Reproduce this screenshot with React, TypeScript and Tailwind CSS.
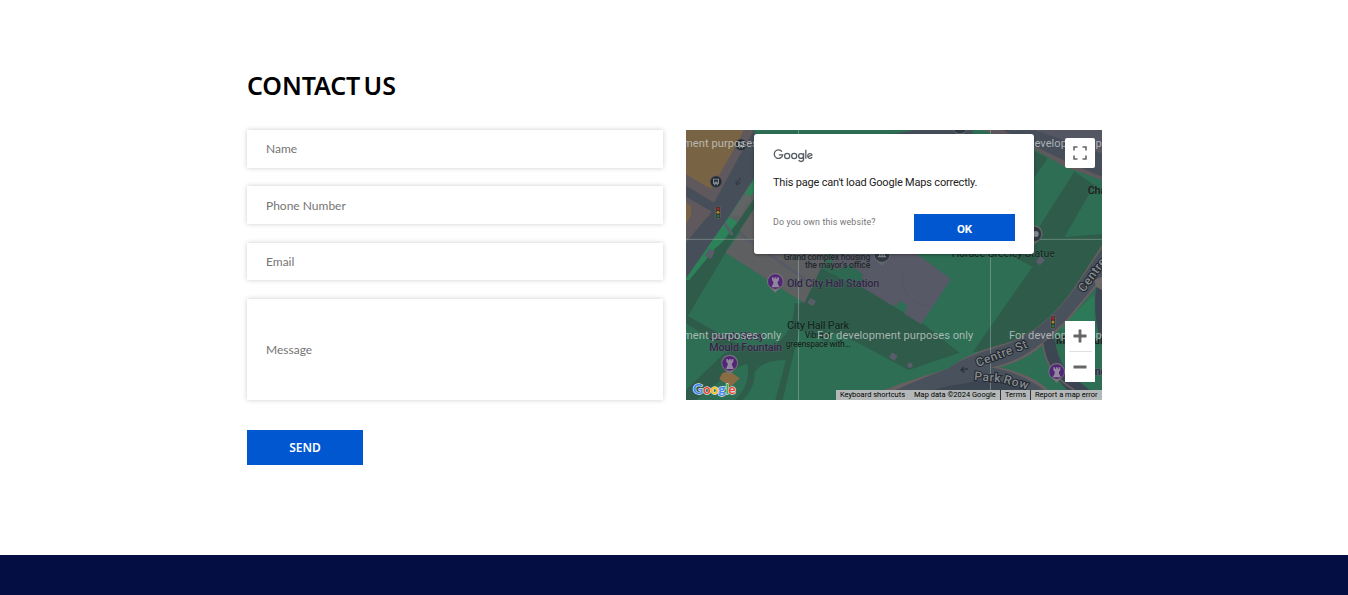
import React from "react";

const fieldClass =
  "block w-full bg-white pl-[19px] pr-4 text-[12px] leading-[18px] text-[#666] placeholder:text-[#757575] placeholder:opacity-100 outline-none shadow-[0_0_5px_rgba(0,0,0,0.2)] font-['Lato',sans-serif]";

function Rook({ x, y }: { x: number; y: number }) {
  return (
    <g transform={`translate(${x} ${y})`}>
      <path d="M-25-1A25 25 0 1 1 25-1C25 16 11 20 0 34C-11 20-25 16-25-1Z" fill="#77727b" />
      <circle r="22" fill="#512577" />
      <path
        d="M-10-13h5v4h3v-4h5v4h3v-4h5v9l-4 4v6l3 5v2h2v4h-23v-4h2v-2l3-5v-6l-4-4z"
        fill="#92879c"
      />
    </g>
  );
}

function DarkPin({ x, y }: { x: number; y: number }) {
  return (
    <g transform={`translate(${x} ${y})`}>
      <path d="M-26-1A26 26 0 1 1 26-1C26 16 11 20 0 34C-11 20-26 16-26-1Z" fill="#63676b" />
      <circle r="22" fill="#303941" />
      <path d="M-12 8v-4h3v-9h-3v-3l12-6 12 6v3h-3v9h3v4z" fill="#83888c" />
      <path d="M-5-5v9M0-5v9M5-5v9" stroke="#303941" strokeWidth="2" />
    </g>
  );
}

function Transit({ x, y }: { x: number; y: number }) {
  return (
    <g transform={`translate(${x} ${y})`}>
      <circle r="17" fill="#222a34" stroke="#4d535a" strokeWidth="1.5" />
      <path d="M-9-9h18v16h-3v4h-4v-4h-4v4h-4v-4h-3z" fill="#8b8f94" />
      <path d="M-6-6h12v6h-12z" fill="#222a34" />
      <circle cx="-5" cy="3.5" r="1.5" fill="#222a34" />
      <circle cx="5" cy="3.5" r="1.5" fill="#222a34" />
    </g>
  );
}

function TrafficLight({ x, y }: { x: number; y: number }) {
  return (
    <g transform={`translate(${x} ${y})`}>
      <rect x="-7" y="-18" width="14" height="36" rx="2" fill="#302e2c" stroke="#777" strokeWidth="1.5" />
      <circle cy="-11" r="4.5" fill="#a02c28" />
      <circle r="4.5" fill="#a98725" />
      <circle cy="11" r="4.5" fill="#28724b" />
    </g>
  );
}

function MapCanvas() {
  return (
    <svg
      className="block h-[270px] w-[416px]"
      viewBox="0 0 1248 810"
      fontFamily="Roboto, sans-serif"
      fontSize="32"
    >
      <rect width="1248" height="810" fill="#2d6e54" />

      {/* shaded lawns and paths */}
      <path d="M1165 125L1225 165 1135 322 1248 312V360L1150 520 1060 610 960 650 860 667 1040 410 915 345V328L1040 322Z" fill="#2e5b4a" />
      <path d="M1030 55L1085 85 1040 150Z" fill="#2e5b4a" />
      <path d="M405 415L425 405 615 525 710 580 820 668 668 720 510 635 425 600C405 575 385 550 340 525L360 490Z" fill="#2e5b4a" />
      <path d="M340 525Q425 560 430 640L330 590Z" fill="#2e5b4a" />
      <path d="M340 520V600L290 810H268L300 690Q225 690 205 730Q210 770 170 810H148Q195 765 185 705L110 650 0 580V555L160 645Q225 685 285 630Q325 590 325 520Z" fill="#2e5b4a" />
      <path d="M115 670L0 780V810H30L150 715 205 690 190 650Z" fill="#2e5b4a" />
      <path d="M120 365L0 568V440L90 320Z" fill="#2e5b4a" />

      {/* plaza in front of the city hall */}
      <path d="M118 368L165 305 130 260 165 190 205 150 440 340 445 372H425L355 520Z" fill="#5e5f61" />
      <path d="M160 310L360 450" stroke="#575a66" strokeWidth="8" />
      <path d="M205 148V185L130 262 155 275 100 345 88 355 10 450H0V430L125 265Z" fill="#2d8259" />
      <path d="M205 205L118 330 92 354 40 450H68L118 365 205 235Z" fill="#2e5b4a" />
      <path d="M132 258L178 190 196 203 162 257Z" fill="#626365" />
      <path d="M112 275L140 315" stroke="#595c69" strokeWidth="8" />
      <rect x="62" y="359" width="20" height="25" fill="#595c69" transform="rotate(28 72 371)" />

      {/* city hall building */}
      <path d="M440 370H690L795 447 705 583 655 551 665 526 643 512 633 527 615 524 522 468 530 438 490 425 483 407 455 420 440 410Z" fill="#585966" />
      <path d="M405 415L425 405 455 420 483 407 490 402 530 432 522 468 490 460Z" fill="#2d6850" />
      <path d="M650 430C645 490 685 530 730 525M530 465L615 525" fill="none" stroke="#535461" strokeWidth="2" />
      <rect x="367" y="507" width="20" height="18" fill="#595c69" transform="rotate(30 377 516)" />
      <rect x="612" y="671" width="20" height="18" fill="#595c69" transform="rotate(35 622 680)" />
      <circle cx="672" cy="706" r="8" fill="#595c69" />
      <rect x="1052" y="383" width="22" height="18" fill="#595c69" transform="rotate(-45 1063 392)" />

      {/* north-west blocks and Broadway */}
      <path d="M0 0H260L0 430Z" fill="#5f585d" />
      <path d="M0 0H172L160 30 75 177 45 160 0 133Z" fill="#786445" />
      <path d="M0 217L15 230V255L0 282Z" fill="#786445" />
      <path d="M203 0H290L205 142 125 265 0 445V337L78 245 0 200V167L84 218Z" fill="#454e59" />

      {/* north-east road */}
      <path d="M205 0H480V12H205Z" fill="#2d6e54" />
      <path d="M560 0H860V14H560Z" fill="#454e59" />
      <path d="M500 0H680Q620 18 500 14Z" fill="#2d6e54" />
      <path d="M890 0H1248V150L1136 110 1040 55Z" fill="#5f585d" />
      <path d="M1025 0H1248V60H1227L1137 45Z" fill="#555663" />
      <path d="M950 0H1045L1248 70V140L1137 93Z" fill="#454e59" />

      {/* Centre St and Park Row */}
      <path d="M1070 600L1223 450 1248 430V810H1150Z" fill="#2d6e54" />
      <path d="M1225 495V590L1110 600Z" fill="#2d7a58" />
      <path d="M520 810Q650 755 790 715Q840 670 960 640Q1080 600 1170 465L1248 345V450L1140 580 1075 640Q1025 690 940 712Q1070 740 1110 810Z" fill="#675f60" />
      <path d="M565 810Q665 760 785 716Q840 677 957 645Q1080 600 1170 470L1248 355V440L1140 570 1065 640Q1000 695 915 712Q1040 735 1105 810Z" fill="#48515c" />
      <path d="M840 760Q950 725 1065 810H670Q750 770 840 760Z" fill="#3c4652" />
      <path d="M1070 640L1105 610Q1110 710 1180 755L1248 810H1170Q1080 720 1070 640Z" fill="#3c4652" />
      <path d="M1070 640Q1080 730 1165 780" fill="none" stroke="#675f60" strokeWidth="5" />
      <path d="M1230 475L1248 450V640Q1220 570 1230 475Z" fill="#3c4652" />
      <path d="M1225 450L1248 440V480L1230 470Z" fill="#6b6867" />
      <path d="M130 722L161 745 135 770 100 748 108 730Z" fill="#896c43" />

      {/* tile borders */}
      <path d="M337.5 0V810M913.5 0V810M0 328H1248" stroke="#9fb2ab" strokeOpacity=".5" strokeWidth="3" />

      <path d="M164 144L153 161M150 151L151 164 163 160" fill="none" stroke="#30363e" strokeWidth="3" />
      <path d="M846 716L826 720M833 712L825 720 835 727" fill="none" stroke="#2c333c" strokeWidth="4" />

      <Transit x={165} y={44} />
      <Transit x={90} y={155} />
      <TrafficLight x={96} y={247} />
      <TrafficLight x={1101} y={576} />
      <Rook x={268} y={455} />
      <Rook x={131} y={700} />
      <Rook x={1112} y={725} />
      <DarkPin x={588} y={374} />
      <DarkPin x={822} y={-12} />
      <g transform="translate(1044 312)">
        <path d="M-26-1A26 26 0 1 1 26-1C26 16 11 20 0 34C-11 20-26 16-26-1Z" fill="#63676b" />
        <circle r="22" fill="#303941" />
        <circle cx="5" r="9" fill="#83888c" />
      </g>

      {/* place labels */}
      <g strokeLinejoin="round" paintOrder="stroke" strokeWidth="3" strokeOpacity=".7" fontWeight="500">
        <g fill="#23282d" stroke="#5c6066" fontSize="26">
          <text x="293" y="389" textLength="260">Grand complex housing</text>
          <text x="357" y="413" textLength="196">the mayor's office</text>
        </g>
        <text x="797" y="381" textLength="310" fill="#1d2c27" stroke="#3f7560" fontSize="32">Horace Greeley Statue</text>
        <g fill="#34234b" stroke="#5a6e66" fontSize="32.5">
          <text x="303" y="471" textLength="277">Old City Hall Station</text>
          <text x="70" y="629" textLength="164">Jacob Wrey</text>
          <text x="70" y="662" textLength="218">Mould Fountain</text>
        </g>
        <g fill="#162820" stroke="#3c7560">
          <text x="303" y="598" textLength="187" fontSize="33">City Hall Park</text>
          <text x="356" y="625" textLength="78" fontSize="26">Vibrant</text>
          <text x="299" y="650" textLength="196" fontSize="26">greenspace with...</text>
        </g>
        <g fill="#171e20" stroke="#3f5b50">
          <text x="1205" y="191">Chambers</text>
          <text x="1110" y="642">Municipal</text>
        </g>
        <text x="1226" y="736" fill="#34234b" stroke="#65736d">ng</text>
      </g>
      <g fill="#868b90" stroke="#20262d" strokeWidth="6" paintOrder="stroke" fontWeight="500" fontSize="36">
        <text transform="translate(875 711) rotate(-21)" textLength="162">Centre St</text>
        <text transform="translate(1194 488) rotate(-54)" textLength="162">Centre St</text>
        <text transform="translate(864 750) rotate(5)" textLength="79">Park</text>
        <text transform="translate(951 758) rotate(16)" textLength="75">Row</text>
      </g>

      {/* watermark */}
      <g fill="#d0d5d4" fillOpacity=".75" fontSize="33.5">
        <text x="-183" y="52" textLength="469">For development purposes only</text>
        <text x="969" y="52" textLength="469">For development purposes only</text>
        <text x="-183" y="628" textLength="469">For development purposes only</text>
        <text x="393" y="628" textLength="469">For development purposes only</text>
        <text x="969" y="628" textLength="469">For development purposes only</text>
      </g>
    </svg>
  );
}

function GoogleMark() {
  return (
    <svg
      className="absolute bottom-0 left-[5px] h-[20px] w-[50px]"
      viewBox="0 0 150 60"
      fontFamily="Lato, sans-serif"
      fontWeight="700"
      fontSize="42"
      strokeLinejoin="round"
      paintOrder="stroke"
    >
      {[
        { c: "G", x: 6, w: 30, f: "#4285f4" },
        { c: "o", x: 36, w: 23, f: "#ea4335" },
        { c: "o", x: 59, w: 23, f: "#fbbc05" },
        { c: "g", x: 82, w: 22, f: "#4285f4" },
        { c: "l", x: 104, w: 9, f: "#34a853" },
        { c: "e", x: 112, w: 22, f: "#ea4335" },
      ].map((l) => (
        <text
          key={l.x}
          x={l.x}
          y="43"
          textLength={l.w}
          lengthAdjust="spacingAndGlyphs"
          fill={l.f}
          stroke="#dce8e4"
          strokeWidth="4"
        >
          {l.c}
        </text>
      ))}
    </svg>
  );
}

function MapDialog() {
  return (
    <div className="absolute left-[68px] top-[4px] h-[120px] w-[280px] rounded-[3px] bg-white px-[19px] pt-[12px] font-['Roboto',sans-serif] shadow-[0_1px_3px_rgba(0,0,0,0.35)]">
      <svg className="block h-[20px] w-[43px]" viewBox="0 0 44 20" fill="none" stroke="#555b61" strokeWidth="1.3">
        <path d="M9.2 5.5A4.4 4.4 0 1 0 10 8.8H6" />
        <circle cx="14.5" cy="10" r="2.6" />
        <circle cx="21.7" cy="10" r="2.6" />
        <circle cx="28.7" cy="10" r="2.5" />
        <path d="M31.3 7.3v5.7c0 3.3-4.2 3.2-5 1.2M33.6 3.7v9M35.8 10.8l4.2-1.8c-.8-2.2-4.6-1.9-4.5 1.1 .1 3 3.3 3.1 4.5 1" />
      </svg>
      <p className="mt-[9px] whitespace-nowrap text-[11px] leading-[16px] tracking-[-0.19px] text-[#222]">
        This page can't load Google Maps correctly.
      </p>
      <div className="mt-[23px] flex items-start justify-between">
        <a className="whitespace-nowrap text-[8.8px] leading-[16px] tracking-[0.15px] text-[#757575]">
          Do you own this website?
        </a>
        <button className="h-[27px] w-[101px] bg-[#0057d0] pt-[4px] text-[11.5px] font-bold leading-[23px] text-white">
          OK
        </button>
      </div>
    </div>
  );
}

function MapPanel() {
  return (
    <div className="relative h-[270px] w-[416px] overflow-hidden">
      <MapCanvas />
      <GoogleMark />
      <div className="absolute bottom-0 right-0 flex h-[10px] items-center bg-[#b4b8b8] font-['Roboto',sans-serif] text-[7.5px] leading-[10px] text-black">
        <span className="w-[74px] whitespace-nowrap pl-[4px]">Keyboard shortcuts</span>
        <span className="w-[91px] whitespace-nowrap border-r border-[#333] pl-[4px]">Map data ©2024 Google</span>
        <span className="w-[30px] whitespace-nowrap border-r border-[#333] pl-[4px]">Terms</span>
        <span className="w-[71px] whitespace-nowrap pl-[4px]">Report a map error</span>
      </div>
      <MapDialog />
      <button className="absolute right-[7px] top-[8px] flex h-[30px] w-[30px] items-center justify-center rounded-[2px] bg-white">
        <svg className="h-[14px] w-[14px]" viewBox="0 0 14 14" fill="none" stroke="#666" strokeWidth="1.6">
          <path d="M1 4.5V1h3.5M9.5 1H13v3.5M13 9.5V13H9.5M4.5 13H1V9.5" />
        </svg>
      </button>
      <div className="absolute bottom-[18px] right-[7px] flex h-[61px] w-[30px] flex-col items-center bg-white">
        <button className="flex h-[30px] w-[30px] items-center justify-center">
          <svg className="h-[14px] w-[14px]" viewBox="0 0 14 14" stroke="#666" strokeWidth="2.8">
            <path d="M.5 7h13M7 .5v13" />
          </svg>
        </button>
        <div className="h-px w-[23px] bg-[#e0e0e0]" />
        <button className="flex h-[30px] w-[30px] items-center justify-center">
          <svg className="h-[14px] w-[14px]" viewBox="0 0 14 14" stroke="#666" strokeWidth="3">
            <path d="M.5 7h13" />
          </svg>
        </button>
      </div>
    </div>
  );
}

export default function App() {
  return (
    <div className="flex h-[595px] flex-col overflow-hidden bg-white">
      <main className="ml-[247px] h-[555px] w-[855px] pt-[67px]">
        <h2 className="h-[63px] whitespace-nowrap font-['Noto_Sans',sans-serif] text-[25px] font-semibold leading-[36px] tracking-[-0.1px] [word-spacing:-3px] text-black">
          CONTACT US
        </h2>
        <div className="flex items-start justify-between">
          <form className="flex w-[416px] flex-col gap-[18.4px]">
            <input className={`${fieldClass} h-[38px] pb-[2px]`} placeholder="Name" />
            <input className={`${fieldClass} h-[38px]`} placeholder="Phone Number" />
            <input className={`${fieldClass} h-[37.5px]`} placeholder="Email" />
            <textarea className={`${fieldClass} h-[101.4px] resize-none pt-[42px]`} placeholder="Message" />
            <button
              type="button"
              className="mt-[11.6px] h-[35px] w-[116px] bg-[#0057d0] pt-px font-['Noto_Sans',sans-serif] text-[12px] font-semibold text-white"
            >
              SEND
            </button>
          </form>
          <MapPanel />
        </div>
      </main>
      <footer className="h-[40px] w-full bg-[#040e43]" />
    </div>
  );
}
